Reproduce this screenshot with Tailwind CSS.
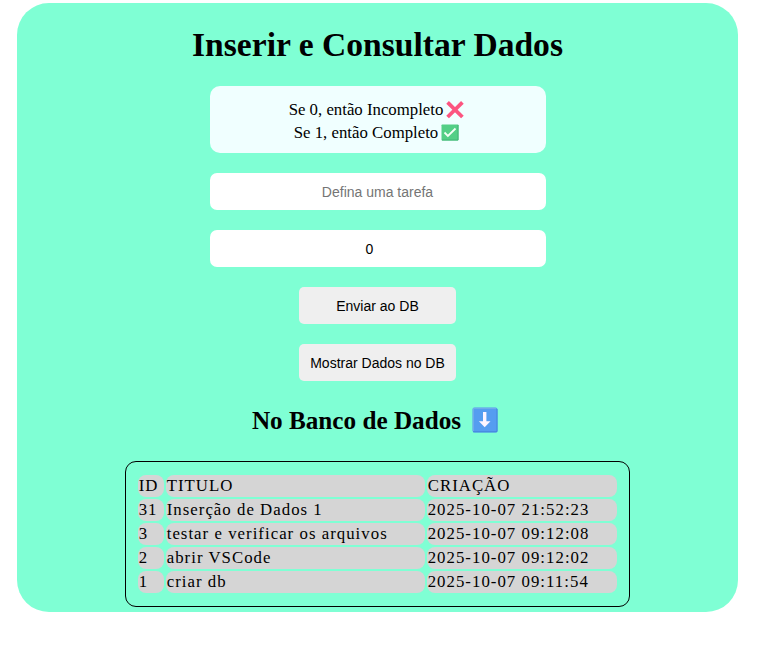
<!DOCTYPE html>
<html lang="pt-BR">
<head>
<meta charset="UTF-8">
<title>Inserir e Consultar Dados</title>
<script src="https://cdn.jsdelivr.net/npm/@tailwindcss/browser@4"></script>
</head>
<body class="bg-white font-['Liberation_Serif',serif] text-black">
<main class="mt-[3px] ml-[17px] flex h-[609px] w-[721px] flex-col items-center rounded-[32px] bg-[#7fffd4]">
  <h1 class="mt-[22px] h-[40px] text-[33.6px] leading-[40px] font-bold whitespace-nowrap">Inserir e Consultar Dados</h1>
  <div class="mt-[21px] flex h-[67px] w-[336px] flex-col items-center rounded-[10px] bg-[#f0ffff] pt-[12px] pr-[2px] text-[16.8px] leading-[23px]">
    <p class="flex items-center gap-[3px] whitespace-nowrap"><span>Se 0, então Incompleto</span>
      <svg class="h-[18px] w-[18px]" viewBox="0 0 18 18"><path d="M1.6 1.4 16.4 16M16.4 1.4 1.6 16" stroke="#fc5580" stroke-width="3.8" fill="none"/></svg></p>
    <p class="flex items-center gap-[3px] whitespace-nowrap"><span>Se 1, então Completo</span>
      <svg class="h-[18px] w-[18px]" viewBox="0 0 18 18"><rect x=".5" y=".5" width="17" height="16" rx=".7" fill="#53cf86"/><path d="M1 16H17V1" stroke="#43b577" fill="none"/><path d="m3.5 8.5 3.4 3.4 7.6-7.4" stroke="#f4fff6" stroke-width="1.8" fill="none"/></svg></p>
  </div>
  <input class="mt-[20px] h-[37px] w-[336px] rounded-[7px] bg-white text-center font-['Liberation_Sans',sans-serif] text-[14px] placeholder:text-[#757575]" placeholder="Defina uma tarefa">
  <input class="mt-[20px] h-[37px] w-[336px] rounded-[7px] bg-white pr-[16px] text-center font-['Liberation_Sans',sans-serif] text-[14px]" value="0">
  <button class="mt-[20px] h-[37px] w-[157px] rounded-[5px] bg-[#efefef] pt-[2px] font-['Liberation_Sans',sans-serif] text-[14px]">Enviar ao DB</button>
  <button class="mt-[20px] h-[37px] w-[157px] rounded-[5px] bg-[#efefef] pt-[2px] font-['Liberation_Sans',sans-serif] text-[14px] whitespace-nowrap">Mostrar Dados no DB</button>
  <h2 class="mt-[24px] mr-[5px] flex h-[30px] items-center gap-[11px] text-[25.2px] leading-[30px] font-bold whitespace-nowrap"><span class="pt-[2px]">No Banco de Dados</span>
    <svg class="h-[26px] w-[26px]" viewBox="0 0 26 26"><rect x=".5" y=".5" width="25" height="25" rx="2" fill="#559df0"/><path d="M1 24.8H25V2" stroke="#4384dc" fill="none"/><path d="M1.3 24V1.3H24" stroke="#76afea" fill="none"/><path d="M11 5h3.4v9.3h4.1l-5.8 6-5.8-6H11Z" fill="#fdf5ff"/></svg></h2>
  <div class="mt-[26px] grid h-[146px] w-[505px] auto-rows-[22px] grid-cols-[26px_259px_190px] gap-[2px] rounded-[11px] border border-black pt-[13px] pl-[12px] text-[16.8px] leading-[22px] tracking-[1.03px] whitespace-nowrap *:rounded-[8px] *:bg-[#d5d5d5] *:pl-[0.7px]">
    <div>ID</div><div>TITULO</div><div>CRIAÇÃO</div>
    <div>31</div><div>Inserção de Dados 1</div><div>2025-10-07 21:52:23</div>
    <div>3</div><div>testar e verificar os arquivos</div><div>2025-10-07 09:12:08</div>
    <div>2</div><div>abrir VSCode</div><div>2025-10-07 09:12:02</div>
    <div>1</div><div>criar db</div><div>2025-10-07 09:11:54</div>
  </div>
</main>
</body>
</html>
